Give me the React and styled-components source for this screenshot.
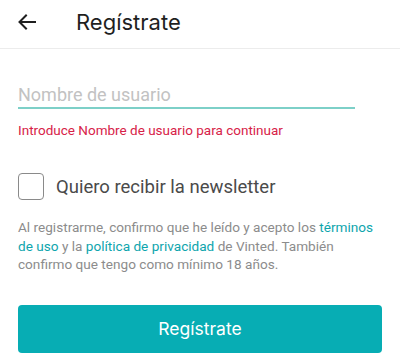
import React from "react";
import styled, { createGlobalStyle } from "styled-components";

const Global = createGlobalStyle`
  html, body { margin: 0; padding: 0; background: #fff; }
  body { font-family: Roboto, "Noto Sans", sans-serif; -webkit-font-smoothing: antialiased; }
  * { box-sizing: border-box; }
`;

const Page = styled.div`
  width: 400px;
  height: 363px;
  overflow: hidden;
  background: #fff;
`;

const Header = styled.header`
  height: 49px;
  display: flex;
  align-items: center;
  padding-left: 17px;
  padding-bottom: 4px;
  border-bottom: 1px solid #ececec;
`;

const BackButton = styled.button`
  border: 0;
  background: none;
  padding: 0;
  width: 20px;
  height: 20px;
  display: flex;
  align-items: center;
  justify-content: center;
  margin-right: 39px;
  color: #1f1f1f;
`;

const Title = styled.h1`
  margin: 0;
  font-family: Inter, "Noto Sans", sans-serif;
  font-weight: 400;
  font-size: 22px;
  line-height: 26px;
  color: #1f1f1f;
`;

const Body = styled.main`
  padding: 0 18px;
  display: flex;
  flex-direction: column;
`;

const Field = styled.div`
  margin-top: 35px;
  width: 337px;
  border-bottom: 2px solid #7dd0c8;
`;

const Input = styled.input`
  width: 100%;
  border: 0;
  outline: none;
  padding: 0 0 1px 0;
  font-family: Roboto, sans-serif;
  font-size: 18px;
  line-height: 22px;
  color: #333;
  background: transparent;
  &::placeholder { color: #c2c2c2; }
`;

const ErrorText = styled.div`
  margin-top: 13px;
  font-size: 13.5px;
  line-height: 16px;
  color: #d72248;
`;

const CheckRow = styled.label`
  margin-top: 35px;
  display: flex;
  align-items: center;
  gap: 12px;
`;

const Box = styled.span`
  width: 26px;
  height: 27px;
  border: 1.5px solid #8a8a8a;
  border-radius: 4px;
  flex: none;
`;

const CheckLabel = styled.span`
  font-size: 18.5px;
  color: #4a4a4a;
`;

const Legal = styled.p`
  margin: 18px 0 0 0;
  font-size: 13.6px;
  line-height: 18.5px;
  color: #8c8c8c;
`;

const Link = styled.a`
  color: #0ea5ad;
  text-decoration: none;
`;

const Submit = styled.button`
  margin-top: 31px;
  width: 364px;
  height: 48px;
  border: 0;
  border-radius: 4px;
  background: #07adb4;
  color: #fff;
  font-family: Inter, sans-serif;
  font-size: 17.5px;
  font-weight: 400;
`;

const ArrowIcon = () => (
  <svg width="18" height="16" viewBox="0 0 18 16" fill="none" stroke="currentColor" strokeWidth="2" strokeLinecap="square">
    <path d="M17 8H2" />
    <path d="M8 1.5L1.5 8L8 14.5" />
  </svg>
);

export default function App() {
  return (
    <Page>
      <Global />
      <Header>
        <BackButton aria-label="Atrás"><ArrowIcon /></BackButton>
        <Title>Regístrate</Title>
      </Header>
      <Body>
        <Field>
          <Input placeholder="Nombre de usuario" />
        </Field>
        <ErrorText>Introduce Nombre de usuario para continuar</ErrorText>
        <CheckRow>
          <Box />
          <CheckLabel>Quiero recibir la newsletter</CheckLabel>
        </CheckRow>
        <Legal>
          Al registrarme, confirmo que he leído y acepto los <Link>términos de uso</Link> y la <Link>política de privacidad</Link> de Vinted. También confirmo que tengo como mínimo 18 años.
        </Legal>
        <Submit>Regístrate</Submit>
      </Body>
    </Page>
  );
}
